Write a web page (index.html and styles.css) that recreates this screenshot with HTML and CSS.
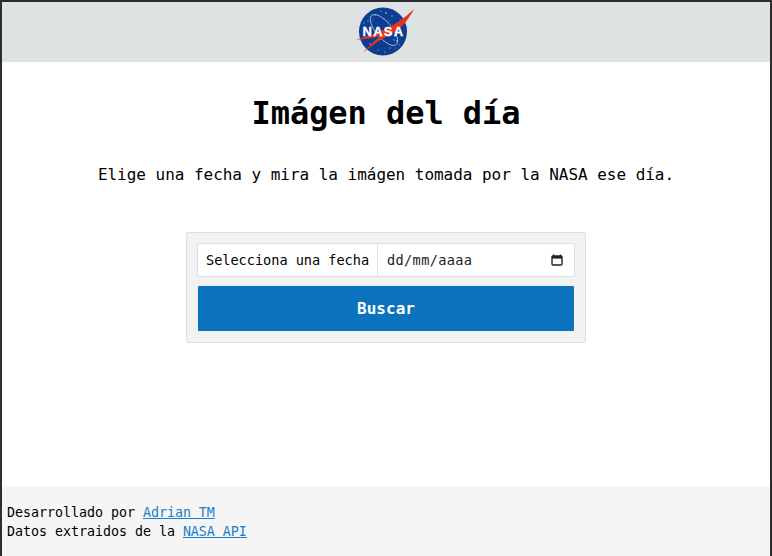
FILE: index.html
```html
<!DOCTYPE html>
<html lang="es">
<head>
  <meta charset="UTF-8">
  <title>Imágen del día</title>
  <link rel="stylesheet" href="styles.css">
</head>
<body>

  <header class="top-bar">
    <svg class="nasa-logo" viewBox="0 0 58 50" width="58" height="50" aria-label="NASA">
      <circle cx="27" cy="24.5" r="24" fill="#0b3d91"/>
      <g fill="#fff" opacity="0.5">
        <circle cx="12" cy="14" r="0.8"/><circle cx="19" cy="8" r="0.7"/><circle cx="30" cy="6" r="0.9"/>
        <circle cx="36" cy="9" r="0.8"/><circle cx="41" cy="34" r="0.9"/><circle cx="34" cy="41" r="0.8"/>
        <circle cx="43" cy="38" r="0.7"/><circle cx="14" cy="37" r="0.8"/><circle cx="22" cy="43" r="0.7"/>
        <circle cx="8" cy="16" r="0.7"/><circle cx="28" cy="12" r="0.6"/><circle cx="38" cy="33" r="0.7"/>
        <circle cx="25" cy="4" r="0.7"/><circle cx="17" cy="13" r="0.6"/><circle cx="40" cy="41" r="0.6"/>
        <circle cx="29" cy="45" r="0.7"/><circle cx="44" cy="12" r="0.6"/><circle cx="33" cy="14" r="0.6"/>
      </g>
      <ellipse cx="28" cy="23" rx="8" ry="19" transform="rotate(-40 28 23)" fill="none" stroke="#b9c7e0" stroke-width="0.8"/>
      <path d="M0 32.5 C14 29 27 24 37 18 C45 13 52 8 58 2 C54 10 48 18 41 23.5 C36 27 32 29 28 31 C20 35 13 41 7 46 C13 39 19 33 25 28.5 C17 31 8 32.5 0 32.5 Z" fill="#e8331f"/>
      <text class="logo-text" x="27.5" y="29" text-anchor="middle">NASA</text>
    </svg>
  </header>

  <main class="content">
    <h1>Imágen del día</h1>
    <p class="intro">Elige una fecha y mira la imágen tomada por la NASA ese día.</p>

    <form class="search-box">
      <div class="input-group">
        <label class="input-label" for="fecha">Selecciona una fecha</label>
        <input type="text" id="fecha" placeholder="dd/mm/aaaa">
        <svg class="calendar-icon" viewBox="0 0 12 12" width="12" height="12">
          <path d="M2.5 0.5v1.5M9.5 0.5v1.5" stroke="#222" stroke-width="1.4" fill="none"/>
          <rect x="1" y="2" width="10" height="9" rx="1" fill="none" stroke="#222" stroke-width="1.4"/>
          <rect x="1" y="2" width="10" height="2.6" fill="#222"/>
        </svg>
      </div>
      <button type="submit">Buscar</button>
    </form>
  </main>

  <footer class="page-footer">
    Desarrollado por <a href="#">Adrian TM</a><br>
    Datos extraidos de la <a href="#">NASA API</a>
  </footer>

</body>
</html>
```

FILE: styles.css
```css
html, body {
  height: 100%;
}

* {
  box-sizing: border-box;
}

body {
  margin: 0;
  display: flex;
  flex-direction: column;
  border: 2px solid #2e2e2e;
  border-bottom: none;
  background: #fff;
  color: #000;
  font-family: "DejaVu Sans Mono", "Liberation Mono", monospace;
}

.top-bar {
  height: 60px;
  flex-shrink: 0;
  display: flex;
  justify-content: center;
  align-items: center;
  background: #dee2e3;
}

.nasa-logo {
  margin-right: 2px;
}

.logo-text {
  font-family: "Liberation Sans", sans-serif;
  font-weight: bold;
  font-size: 13px;
  letter-spacing: 1.3px;
  fill: #fff;
  stroke: #fff;
  stroke-width: 0.3px;
}

.content {
  flex: 1;
  display: flex;
  flex-direction: column;
  align-items: center;
}

h1 {
  margin: 32px 0 0;
  font-size: 32px;
  line-height: 38px;
  letter-spacing: -0.06px;
}

.intro {
  margin: 31px 0 0;
  font-size: 16px;
  line-height: 24px;
  letter-spacing: -0.03px;
}

.search-box {
  width: 400px;
  margin-top: 45px;
  padding: 10px 10px 11px;
  display: flex;
  flex-direction: column;
  gap: 9px;
  background: #f2f2f2;
  border: 1px solid #dedede;
  border-radius: 2px;
}

.input-group {
  display: flex;
  align-items: center;
  height: 34px;
  background: #fff;
  border: 1px solid #dedede;
  border-radius: 2px;
}

.input-label {
  width: 180px;
  height: 100%;
  padding-left: 8px;
  display: flex;
  align-items: center;
  font-size: 13.6px;
  letter-spacing: -0.03px;
  white-space: nowrap;
  border-right: 1px solid #dedede;
}

#fecha {
  flex: 1;
  min-width: 0;
  height: 100%;
  padding: 0 9px;
  border: none;
  outline: none;
  background: transparent;
  font-family: inherit;
  font-size: 13.6px;
  letter-spacing: 0.35px;
}

#fecha::placeholder {
  color: #222;
  opacity: 1;
}

.calendar-icon {
  margin-right: 11px;
  flex-shrink: 0;
}

button[type="submit"] {
  height: 45px;
  margin: 0 1px;
  border: none;
  border-radius: 1px;
  background: #0b72bd;
  color: #fff;
  font-family: inherit;
  font-size: 16px;
  font-weight: bold;
  cursor: pointer;
}

.page-footer {
  height: 70px;
  flex-shrink: 0;
  padding: 17px 5px 0;
  background: #f5f5f5;
  font-size: 13.33px;
  line-height: 19px;
  letter-spacing: -0.03px;
}

.page-footer a {
  color: #1a80c8;
}
```
